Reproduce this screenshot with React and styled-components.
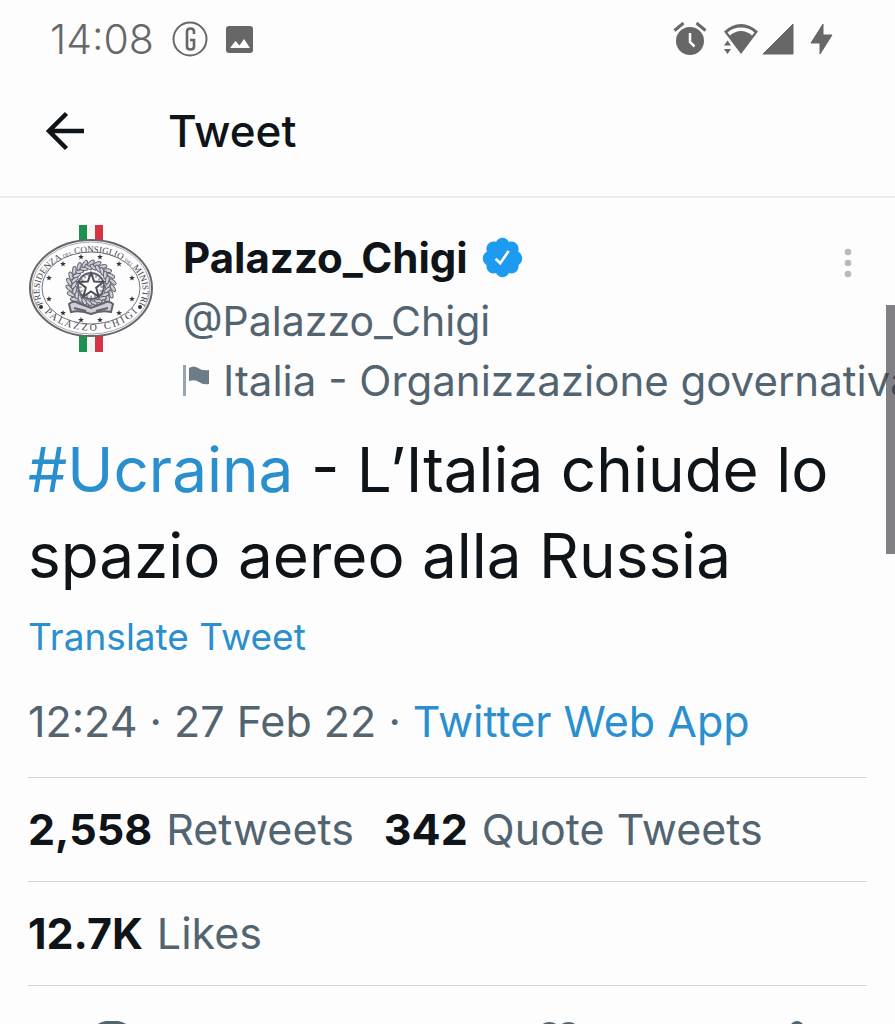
import React from "react";
import styled, { createGlobalStyle } from "styled-components";

const ink = "#0f1419";
const muted = "#536471";
const blue = "#2a8fce";
const rule = "#d3d7d9";
const system = "#676767";

const GlobalStyle = createGlobalStyle`
  * { box-sizing: border-box; }
  body { margin: 0; background: #fdfdfd; }
`;

const Screen = styled.div`
  position: relative;
  width: 100%;
  height: 100vh;
  overflow: hidden;
  background: #fdfdfd;
  color: ${ink};
  font-family: Inter, "Liberation Sans", sans-serif;
`;

const StatusBar = styled.div`
  display: flex;
  align-items: center;
  justify-content: space-between;
  height: 66px;
  padding: 12px 62px 0 50px;
  color: ${system};
`;

const StatusGroup = styled.div`
  display: flex;
  align-items: center;
  gap: ${(p) => p.$gap}px;
`;

const Clock = styled.time`
  font-size: 41px;
  line-height: 48px;
  font-weight: 300;
`;

const Header = styled.header`
  display: flex;
  align-items: center;
  gap: 80px;
  height: 132px;
  padding: 0 44px;
  border-bottom: 2px solid #ebeced;
`;

const IconButton = styled.button`
  display: flex;
  align-items: center;
  justify-content: center;
  padding: 0;
  border: 0;
  background: none;
  color: ${(p) => p.$color || ink};
  cursor: pointer;
`;

const Title = styled.h1`
  margin: 0;
  font-size: 44px;
  line-height: 56px;
  font-weight: 500;
`;

const Article = styled.article`
  padding: 27px 28px 0;
`;

const Profile = styled.div`
  display: flex;
  gap: 28px;
`;

const ProfileText = styled.div`
  flex: 1;
  min-width: 0;
`;

const NameRow = styled.div`
  display: flex;
  align-items: center;
  gap: 12px;
  height: 64px;
`;

const Name = styled.a`
  color: ${ink};
  font-size: 42px;
  font-weight: 700;
  text-decoration: none;
`;

const MoreSlot = styled.div`
  margin-left: auto;
  padding: 12px 15px 0 0;
`;

const Handle = styled.div`
  color: ${muted};
  font-size: 41px;
  line-height: 64px;
`;

const Label = styled.div`
  display: flex;
  align-items: center;
  gap: 12px;
  color: ${muted};
  font-size: 42px;
  line-height: 56px;
  white-space: nowrap;

  svg { flex-shrink: 0; }
`;

const Body = styled.p`
  margin: 18px 0 10px;
  font-size: 62px;
  line-height: 86px;
`;

const TextLink = styled.a`
  color: ${blue};
  text-decoration: none;
`;

const Translate = styled(TextLink)`
  display: block;
  font-size: 37px;
  line-height: 56px;
`;

const Meta = styled.div`
  color: ${muted};
  font-size: 43px;
  line-height: 112px;
  white-space: nowrap;
`;

const StatRow = styled.div`
  display: flex;
  gap: 30px;
  border-top: 1px solid ${rule};
  line-height: 103px;
`;

const Stat = styled.a`
  display: flex;
  gap: 14px;
  color: ${muted};
  font-size: 43px;
  text-decoration: none;
  white-space: nowrap;

  b {
    color: ${ink};
    font-weight: 700;
  }
`;

const Actions = styled.div`
  display: flex;
  justify-content: space-around;
  margin: 0 -28px;
  padding-top: 34px;
  position: relative;

  &::before {
    content: "";
    position: absolute;
    top: 0;
    left: 28px;
    right: 28px;
    border-top: 1px solid ${rule};
  }
`;

const ScrollThumb = styled.div`
  position: absolute;
  top: 305px;
  right: 0;
  width: 9px;
  height: 249px;
  background: rgba(60, 60, 66, 0.64);
`;

const stars = [
  [53, 32], [72, 32], [35, 39], [91, 39], [21, 53], [104, 53],
  [21, 74], [104, 74], [35, 88], [91, 88], [53, 95], [72, 95],
];

const leaves = Array.from({ length: 44 }, (_, i) => {
  const ring = i % 2;
  const a = (Math.PI * 2 * i) / 44;
  return {
    x: 63 + (ring ? 22 : 17) * Math.cos(a),
    y: 60 + (ring ? 22 : 18) * Math.sin(a),
    turn: (a * 180) / Math.PI + (ring ? 50 : 120),
  };
});

function starPoints(cx, cy, r) {
  return Array.from({ length: 10 }, (_, i) => {
    const a = (Math.PI * i) / 5 - Math.PI / 2;
    const d = i % 2 ? r * 0.42 : r;
    return `${cx + d * Math.cos(a)},${cy + d * Math.sin(a)}`;
  }).join(" ");
}

function Emblem() {
  return (
    <svg width="127" height="127" viewBox="0 0 127 127" role="img" aria-label="Palazzo Chigi">
      <rect x="51" y="0" width="8" height="127" fill="#1d9150" />
      <rect x="59" y="0" width="8" height="127" fill="#f5f5f2" />
      <rect x="67" y="0" width="8" height="127" fill="#d63346" />
      <ellipse cx="63" cy="63" rx="61" ry="48" fill="#fdfdfd" stroke="#66666c" strokeWidth="2" />
      <ellipse cx="63" cy="63" rx="59" ry="46" fill="none" stroke="#a9a9ad" strokeWidth="1" />
      <ellipse cx="63" cy="63" rx="49" ry="36" fill="none" stroke="#77777c" strokeWidth="1" />
      <defs>
        <path id="upperArc" d="M14.500 78A51.500 38 0 1 1 111.500 78" />
        <path id="lowerArc" d="M11 80A57 43.500 0 0 0 115 80" />
      </defs>
      <g fill="#44454f" fontFamily="Liberation Serif, serif" textAnchor="middle">
        <text fontSize="9">
          <textPath href="#upperArc" startOffset="50%">
            PRESIDENZA <tspan fontSize="5">DEL</tspan> CONSIGLIO <tspan fontSize="5">DEI</tspan> MINISTRI
          </textPath>
        </text>
        <text fontSize="10">
          <textPath href="#lowerArc" startOffset="50%">{"P A L A Z Z O \u00a0 C H I G I"}</textPath>
        </text>
      </g>
      <circle cx="13" cy="82" r="2" fill="#33333a" />
      <circle cx="112" cy="82" r="2" fill="#33333a" />
      {stars.map(([x, y]) => (
        <polygon key={`${x}-${y}`} points={starPoints(x, y, 3)} fill="#33333a" />
      ))}
      <g fill="#cfd0d6" stroke="#62636f">
        {leaves.map(({ x, y, turn }) => (
          <ellipse key={turn} cx={x} cy={y} rx="4" ry="1.800" transform={`rotate(${turn} ${x} ${y})`} />
        ))}
        <circle cx="63" cy="61" r="13" fill="#fdfdfd" strokeWidth="2" />
        <circle cx="63" cy="61" r="11" fill="none" strokeWidth="3" strokeDasharray="2 2" opacity="0.6" />
        <path d="M41 79q4-4 9-1l13 5 13-5q5-3 9 1l-2 8q-10-2-20 2-10-4-20-2z" strokeWidth="2" />
        <path d="M46 83l12 3M80 83l-12 3" strokeWidth="2" />
      </g>
      <polygon points={starPoints(63, 61, 13)} fill="#fdfdfd" stroke="#4c4d59" strokeWidth="2" />
    </svg>
  );
}

function BackArrow() {
  return (
    <svg width="44" height="44" viewBox="0 0 44 44" fill="none" stroke="currentColor" strokeWidth="4.500">
      <path d="M40 22H6M22.500 4.500L5 22l17.500 17.500" />
    </svg>
  );
}

function GBadge() {
  return (
    <svg width="36" height="36" viewBox="0 0 36 36" fill="none" stroke="currentColor">
      <circle cx="18" cy="18" r="16.500" strokeWidth="2" />
      <path d="M22 13v-2.500q0-3-3.500-3t-3.500 3v15q0 3 3.500 3t3.500-3V19h-4" strokeWidth="2.600" />
    </svg>
  );
}

function Picture() {
  return (
    <svg width="27" height="27" viewBox="0 0 27 27">
      <rect width="27" height="27" rx="3" fill="currentColor" />
      <path d="M4 22l5.500-7 4 4.500L18 13l6 9z" fill="#fdfdfd" />
    </svg>
  );
}

function Alarm() {
  return (
    <svg width="34" height="34" viewBox="0 0 34 34" fill="none" stroke="currentColor">
      <circle cx="17" cy="19" r="14" fill="currentColor" stroke="none" />
      <path d="M1.500 8.500l9-7.500M32.500 8.500l-9-7.500" strokeWidth="3" />
      <path d="M17 11v9l4.500 4.500" stroke="#fdfdfd" strokeWidth="2.500" />
    </svg>
  );
}

function Wifi() {
  return (
    <svg width="36" height="32" viewBox="0 0 36 32" fill="currentColor">
      <path d="M18 31L1 8.500Q9 1 18 1t17 7.500z" />
      <path d="M4.500 9.500Q10 4.500 18 4.500t13.500 5l-2.500 3Q24 8 18 8T7 12.500z" fill="#fdfdfd" />
      <path d="M0 16h6l6 8.500-3 6H0z" fill="#fdfdfd" />
      <path d="M1 22.500l3.500-5 3.500 5zM1 26h7l-3.500 5z" />
    </svg>
  );
}

function Signal() {
  return (
    <svg width="32" height="32" viewBox="0 0 32 32" fill="currentColor">
      <path d="M1 31L31 1v30z" stroke="currentColor" strokeLinejoin="round" />
    </svg>
  );
}

function Bolt() {
  return (
    <svg width="23" height="32" viewBox="0 0 23 32" fill="currentColor">
      <path d="M13 1v11h9L10 31V20H1z" stroke="currentColor" strokeLinejoin="round" />
    </svg>
  );
}

function Verified() {
  return (
    <svg width="45" height="45" viewBox="0 0 24 24">
      <path
        fill="#1d9bf0"
        d="M22.500 12.500c0-1.580-.875-2.950-2.148-3.600.154-.435.238-.905.238-1.400 0-2.210-1.710-3.998-3.818-3.998-.470 0-.920.084-1.336.250C14.818 2.415 13.510 1.500 12 1.500s-2.816.917-3.437 2.250c-.415-.165-.866-.250-1.336-.250-2.110 0-3.818 1.790-3.818 4 0 .494.083.964.237 1.400-1.272.650-2.147 2.018-2.147 3.600 0 1.495.782 2.798 1.942 3.486-.020.170-.032.340-.032.514 0 2.210 1.708 4 3.818 4 .470 0 .920-.086 1.335-.250.620 1.334 1.926 2.250 3.437 2.250 1.512 0 2.818-.916 3.437-2.250.415.163.865.248 1.336.248 2.110 0 3.818-1.790 3.818-4 0-.174-.012-.344-.033-.513 1.158-.687 1.943-1.990 1.943-3.484z"
      />
      <path d="M8.300 12.700l2.500 2.400 4.500-6.600" fill="none" stroke="#fff" strokeWidth="1.400" />
    </svg>
  );
}

function More() {
  return (
    <svg width="8" height="30" viewBox="0 0 8 30" fill="currentColor">
      <circle cx="4" cy="4" r="3.300" />
      <circle cx="4" cy="15" r="3.300" />
      <circle cx="4" cy="26" r="3.300" />
    </svg>
  );
}

function Flag() {
  return (
    <svg width="28" height="34" viewBox="0 0 28 34">
      <path d="M1.500 1v31" stroke="#9aa5ad" strokeWidth="3" />
      <path d="M6 4q5-3 9 0t11 2v14q-6 1-10-2t-10-1z" fill="#6d7c87" />
    </svg>
  );
}

const actionIcons = {
  Reply: <path d="M17 4h12q12 2 12 14 0 9-8 14L20 41v-9h-3Q5 30 5 18 5 6 17 4z" />,
  Retweet: <path d="M4 18l8-8 8 8M12 11v20q0 5 5 5h9M42 28l-8 8-8-8M34 35V15q0-5-5-5h-9" />,
  Like: <path d="M23 41Q5 29 5 15 5 5 13.500 5q6.500 0 9.500 7 3-7 9.500-7Q41 5 41 15q0 14-18 26z" />,
  Share: <path d="M33 8L13 22l20 15M42 9a5 5 0 1 1-10 0 5 5 0 0 1 10 0zM15 22a5 5 0 1 1-10 0 5 5 0 0 1 10 0zM42 37a5 5 0 1 1-10 0 5 5 0 0 1 10 0z" />,
};

export default function App() {
  return (
    <Screen>
      <GlobalStyle />
      <StatusBar>
        <StatusGroup $gap={18}>
          <Clock>14:08</Clock>
          <GBadge />
          <Picture />
        </StatusGroup>
        <StatusGroup $gap={16}>
          <Alarm />
          <StatusGroup $gap={3}>
            <Wifi />
            <Signal />
          </StatusGroup>
          <Bolt />
        </StatusGroup>
      </StatusBar>
      <Header>
        <IconButton aria-label="Back"><BackArrow /></IconButton>
        <Title>Tweet</Title>
      </Header>
      <Article>
        <Profile>
          <Emblem />
          <ProfileText>
            <NameRow>
              <Name href="#profile">Palazzo_Chigi</Name>
              <Verified />
              <MoreSlot>
                <IconButton aria-label="More" $color="#b4bcc1"><More /></IconButton>
              </MoreSlot>
            </NameRow>
            <Handle>@Palazzo_Chigi</Handle>
            <Label><Flag />Italia - Organizzazione governativa</Label>
          </ProfileText>
        </Profile>
        <Body>
          <TextLink href="#ucraina">#Ucraina</TextLink> - L’Italia chiude lo spazio aereo alla Russia
        </Body>
        <Translate href="#translate">Translate Tweet</Translate>
        <Meta>
          12:24 · 27 Feb 22 · <TextLink href="#source">Twitter Web App</TextLink>
        </Meta>
        <StatRow>
          <Stat href="#retweets"><b>2,558</b> Retweets</Stat>
          <Stat href="#quotes"><b>342</b> Quote Tweets</Stat>
        </StatRow>
        <StatRow>
          <Stat href="#likes"><b>12.7K</b> Likes</Stat>
        </StatRow>
        <Actions>
          {Object.entries(actionIcons).map(([name, shape]) => (
            <IconButton key={name} aria-label={name} $color={muted}>
              <svg width="46" height="46" viewBox="0 0 46 46" fill="none" stroke="currentColor" strokeWidth="4">
                {shape}
              </svg>
            </IconButton>
          ))}
        </Actions>
      </Article>
      <ScrollThumb />
    </Screen>
  );
}
